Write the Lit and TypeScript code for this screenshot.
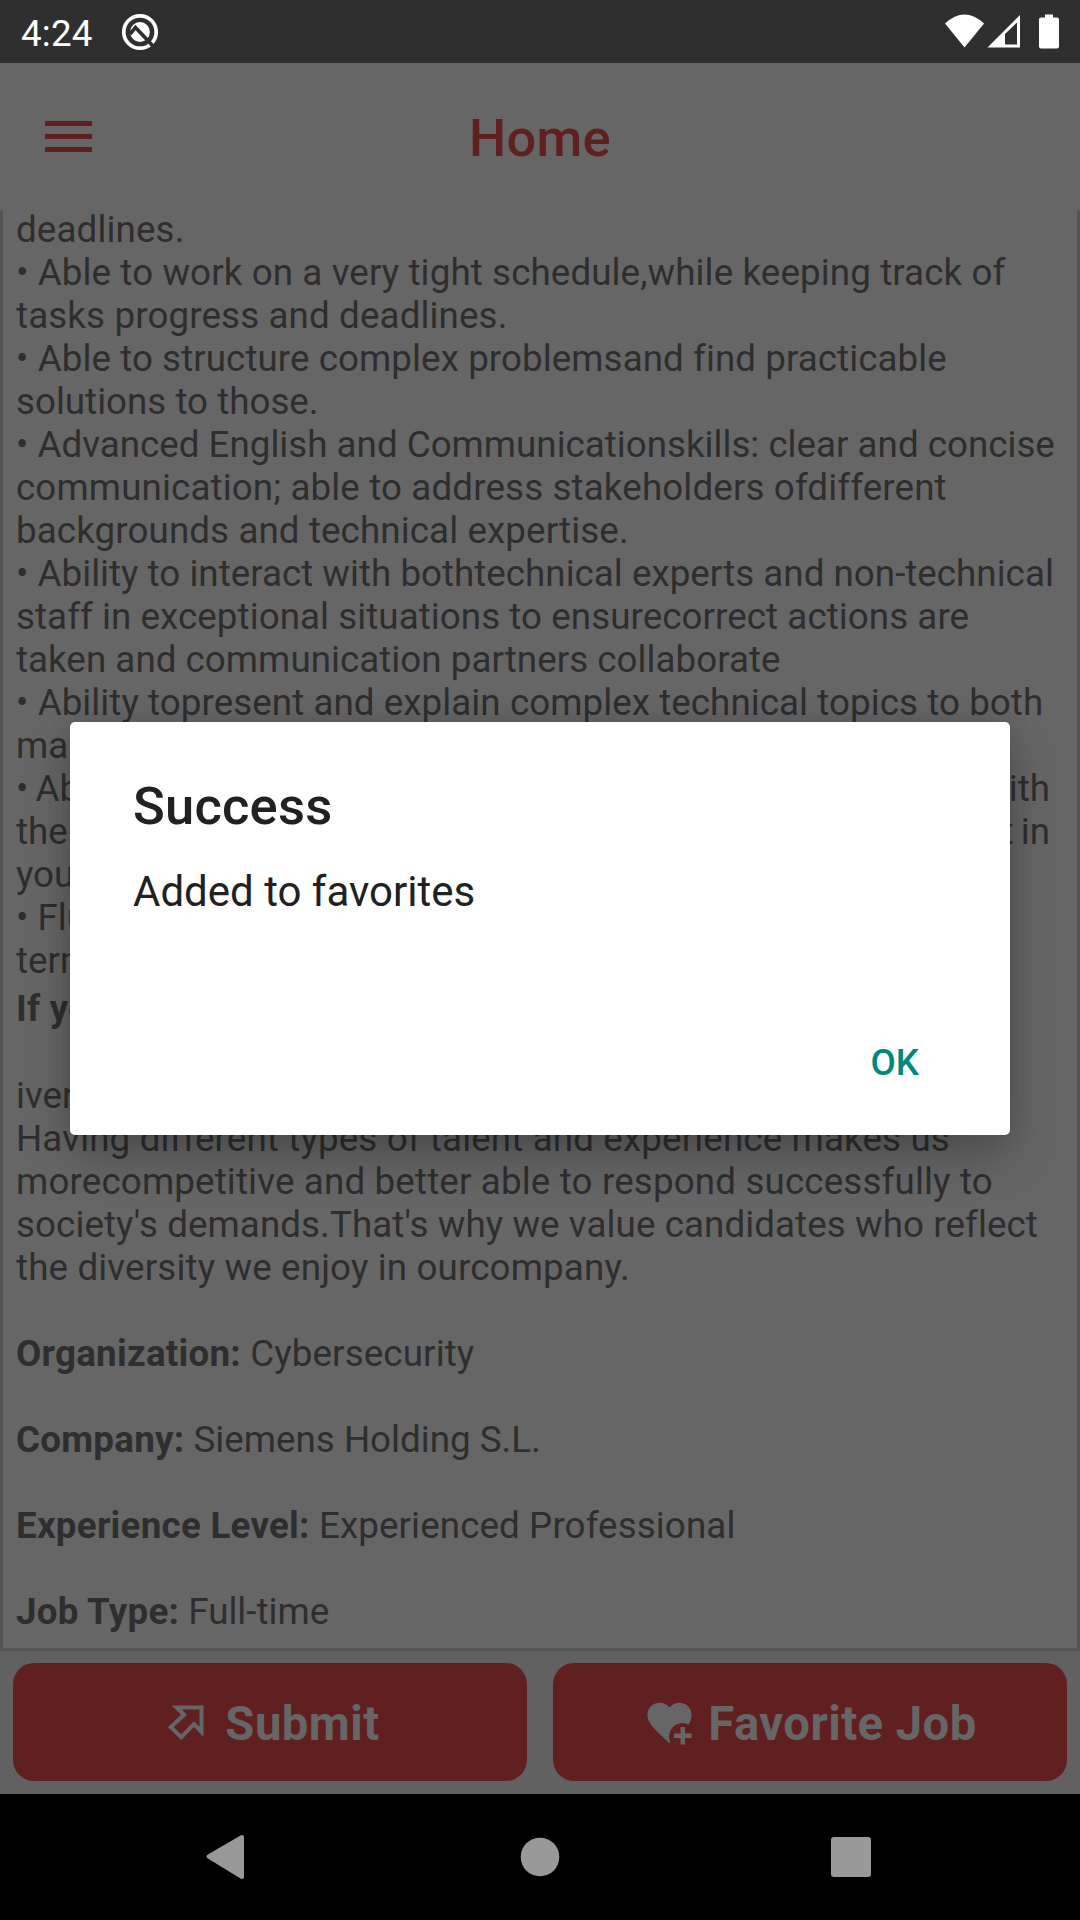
import { LitElement, html, css } from "lit";
import { customElement } from "lit/decorators.js";
import { styleMap } from "lit/directives/style-map.js";

// track: letter spacing of the line's regular text, in pixels
type Line = { text?: string; label?: string; kind?: string; track?: number };

const LINES: Line[] = [
  { text: "deadlines.", track: 0.12 },
  { text: "• Able to work on a very tight schedule,while keeping track of", track: 0.1 },
  { text: "tasks progress and deadlines.", track: 0.12 },
  { text: "• Able to structure complex problemsand find practicable", track: 0.07 },
  { text: "solutions to those." },
  { text: "• Advanced English and Communicationskills: clear and concise" },
  { text: "communication; able to address stakeholders ofdifferent", track: 0.13 },
  { text: "backgrounds and technical expertise.", track: 0.1 },
  { text: "• Ability to interact with bothtechnical experts and non-technical", track: 0.015 },
  { text: "staff in exceptional situations to ensurecorrect actions are", track: 0.06 },
  { text: "taken and communication partners collaborate", track: 0.03 },
  { text: "• Ability topresent and explain complex technical topics to both", track: 0.06 },
  { text: "management" },
  { text: "• Ability", kind: "split", label: "with" },
  { text: "the", kind: "split", label: "it in" },
  { text: "your" },
  { text: "• Fluent" },
  { text: "terms" },
  { label: "If you", kind: "lead" },
  {},
  { text: "iversity" },
  { text: "Having different types of talent and experience makes us", track: 0.13 },
  { text: "morecompetitive and better able to respond successfully to", track: 0.15 },
  { text: "society's demands.That's why we value candidates who reflect", track: 0.08 },
  { text: "the diversity we enjoy in ourcompany.", track: 0.14 },
  {},
  { label: "Organization:", text: "Cybersecurity", track: 0.12 },
  {},
  { label: "Company:", text: "Siemens Holding S.L." },
  {},
  { label: "Experience Level:", text: "Experienced Professional", track: 0.1 },
  {},
  { label: "Job Type:", text: "Full-time" },
];

@customElement("app-root")
export class AppRoot extends LitElement {
  static styles = css`
    :host {
      display: block;
      width: 1080px;
      height: 1920px;
      overflow: hidden;
      position: relative;
      background: #616161;
      font-family: Roboto, sans-serif;
    }
    .screen {
      display: flex;
      flex-direction: column;
      height: 1920px;
    }
    svg {
      display: block;
    }
    .status {
      height: 63px;
      flex: none;
      background: #2f2f2f;
      display: flex;
      align-items: center;
      padding: 0 20px 0 21px;
      box-sizing: border-box;
      color: #fff;
    }
    .time {
      font-size: 36.75px;
      line-height: 43px;
      letter-spacing: 0.2px;
      margin-top: 4px;
      width: 100px;
    }
    .sys {
      margin-left: auto;
    }
    .header {
      height: 147px;
      flex: none;
      background: #666;
      display: grid;
      grid-template-columns: 140px 1fr 140px;
      align-items: center;
      color: #602020;
    }
    .menu {
      margin-left: 45px;
      display: flex;
      flex-direction: column;
      gap: 8px;
    }
    .bar {
      width: 47px;
      height: 5px;
      background: #602020;
    }
    .title {
      text-align: center;
      font-size: 52.5px;
      font-weight: 500;
      line-height: 62px;
      letter-spacing: 0.3px;
      margin-top: 3px;
    }
    .body {
      height: 1441px;
      flex: none;
      box-sizing: border-box;
      border: 3px solid #545454;
      border-top: 1px solid #636363;
      background: #666;
      padding: 0 27px 0 13px;
      color: #2e2e2e;
      font-size: 36.75px;
    }
    .lines {
      margin-top: -3px;
    }
    .line {
      height: 43px;
      line-height: 43px;
      white-space: pre;
    }
    .lead {
      margin: 5px 0 1px;
    }
    .split {
      display: flex;
      justify-content: space-between;
      word-spacing: -2px;
    }
    .strong {
      font-weight: 700;
      letter-spacing: 0.25px;
    }
    .actions {
      flex: 1;
      display: grid;
      grid-template-columns: 1fr 1fr;
      gap: 26px;
      padding: 12px 13px 13px;
      background: #616161;
    }
    .action {
      background: #602020;
      border-radius: 21px;
      color: #666;
      display: flex;
      align-items: center;
      justify-content: center;
      font-size: 47.25px;
      font-weight: 700;
      letter-spacing: 0.45px;
      gap: 12px;
    }
    .caption {
      padding-top: 3px;
    }
    .nav {
      height: 126px;
      flex: none;
      background: #000;
    }
    .dialog {
      position: absolute;
      left: 70px;
      top: 722px;
      width: 940px;
      height: 413px;
      box-sizing: border-box;
      background: #fff;
      border-radius: 5px;
      box-shadow: 0 22px 50px rgba(0, 0, 0, 0.24), 0 0 26px rgba(0, 0, 0, 0.1);
      color: #212121;
      padding: 53px 63px 0;
      display: flex;
      flex-direction: column;
    }
    .heading {
      font-size: 52.5px;
      line-height: 62px;
      font-weight: 500;
      letter-spacing: 0.2px;
    }
    .message {
      font-size: 42px;
      line-height: 50px;
      margin-top: 30px;
    }
    .ok {
      font-size: 36.75px;
      line-height: 43px;
      font-weight: 500;
      color: #00897b;
      align-self: flex-end;
      margin: 124px 28px 0 0;
    }
  `;

  private renderLine(line: Line) {
    if (line.kind === "split") {
      return html`<div class="line split"><span>${line.text}</span><span>${line.label}</span></div>`;
    }
    const label = line.label ? html`<span class="strong">${line.label}</span>` : "";
    const space = line.label && line.text ? " " : "";
    const style = styleMap({ letterSpacing: `${line.track ?? 0}px` });
    return html`<div class="line ${line.kind ?? ""}" style=${style}>${label}${space}${line.text ?? ""}</div>`;
  }

  render() {
    return html`
      <div class="screen">
        <div class="status">
          <div class="time">4:24</div>
          <svg width="38" height="38" viewBox="0 0 38 38">
            <circle cx="19" cy="19" r="16.2" fill="none" stroke="#fff" stroke-width="3.7" />
            <circle cx="19" cy="19" r="9.9" fill="#fff" />
            <path d="M9 21 L14.5 14.5 L32 33" fill="none" stroke="#2f2f2f" stroke-width="3.6" />
          </svg>
          <svg class="sys" width="120" height="38" viewBox="0 0 120 38">
            <g fill="#fff">
              <path d="M5 10.5 Q24.500 -7.500 44 10.500 L24.500 34.500Z" />
              <path fill-rule="evenodd" d="M47.500 34.500 L80 2 V34.500Z M65 21 V31.500 H77 V9.500Z" />
              <path d="M105 1.500 h8 v3 h4 q2 0 2 2 v27 q0 2 -2 2 h-16 q-2 0 -2 -2 v-27 q0 -2 2 -2 h4z" />
            </g>
          </svg>
        </div>
        <div class="header">
          <div class="menu"><div class="bar"></div><div class="bar"></div><div class="bar"></div></div>
          <div class="title">Home</div>
        </div>
        <div class="body"><div class="lines">${LINES.map((l) => this.renderLine(l))}</div></div>
        <div class="actions">
          <div class="action">
            <svg width="53" height="53" viewBox="0 -3 53 53">
              <path
                fill="none"
                stroke="currentColor"
                stroke-width="4"
                d="M16.500 8.500 H41.500 V33 L34 25.200 L21.200 38.200 L10.800 28 L24.200 15.800Z"
              />
            </svg>
            <span class="caption">Submit</span>
          </div>
          <div class="action">
            <svg width="53" height="53" viewBox="0 0 24 24">
              <path
                fill="currentColor"
                d="M12 21.350 L10.550 20.030 C5.400 15.360 2 12.270 2 8.500 C2 5.410 4.420 3 7.500 3 C9.240 3 10.910 3.810 12 5.080 C13.090 3.810 14.760 3 16.500 3 C19.580 3 22 5.410 22 8.500 C22 10 21.500 11.500 20.600 13 A6 6 0 0 0 12.400 21Z M17 14 V17 H14 V19 H17 V22 H19 V19 H22 V17 H19 V14Z"
              />
            </svg>
            <span class="caption">Favorite Job</span>
          </div>
        </div>
        <div class="nav">
          <svg width="1080" height="126" viewBox="0 0 1080 126">
            <g fill="#999">
              <path d="M208.500 62.500 L242 43 V83Z" stroke="#999" stroke-width="4" stroke-linejoin="round" />
              <circle cx="540" cy="63" r="19.300" />
              <rect x="831" y="43" width="40" height="40" rx="3" />
            </g>
          </svg>
        </div>
      </div>
      <div class="dialog">
        <div class="heading">Success</div>
        <div class="message">Added to favorites</div>
        <div class="ok">OK</div>
      </div>
    `;
  }
}
